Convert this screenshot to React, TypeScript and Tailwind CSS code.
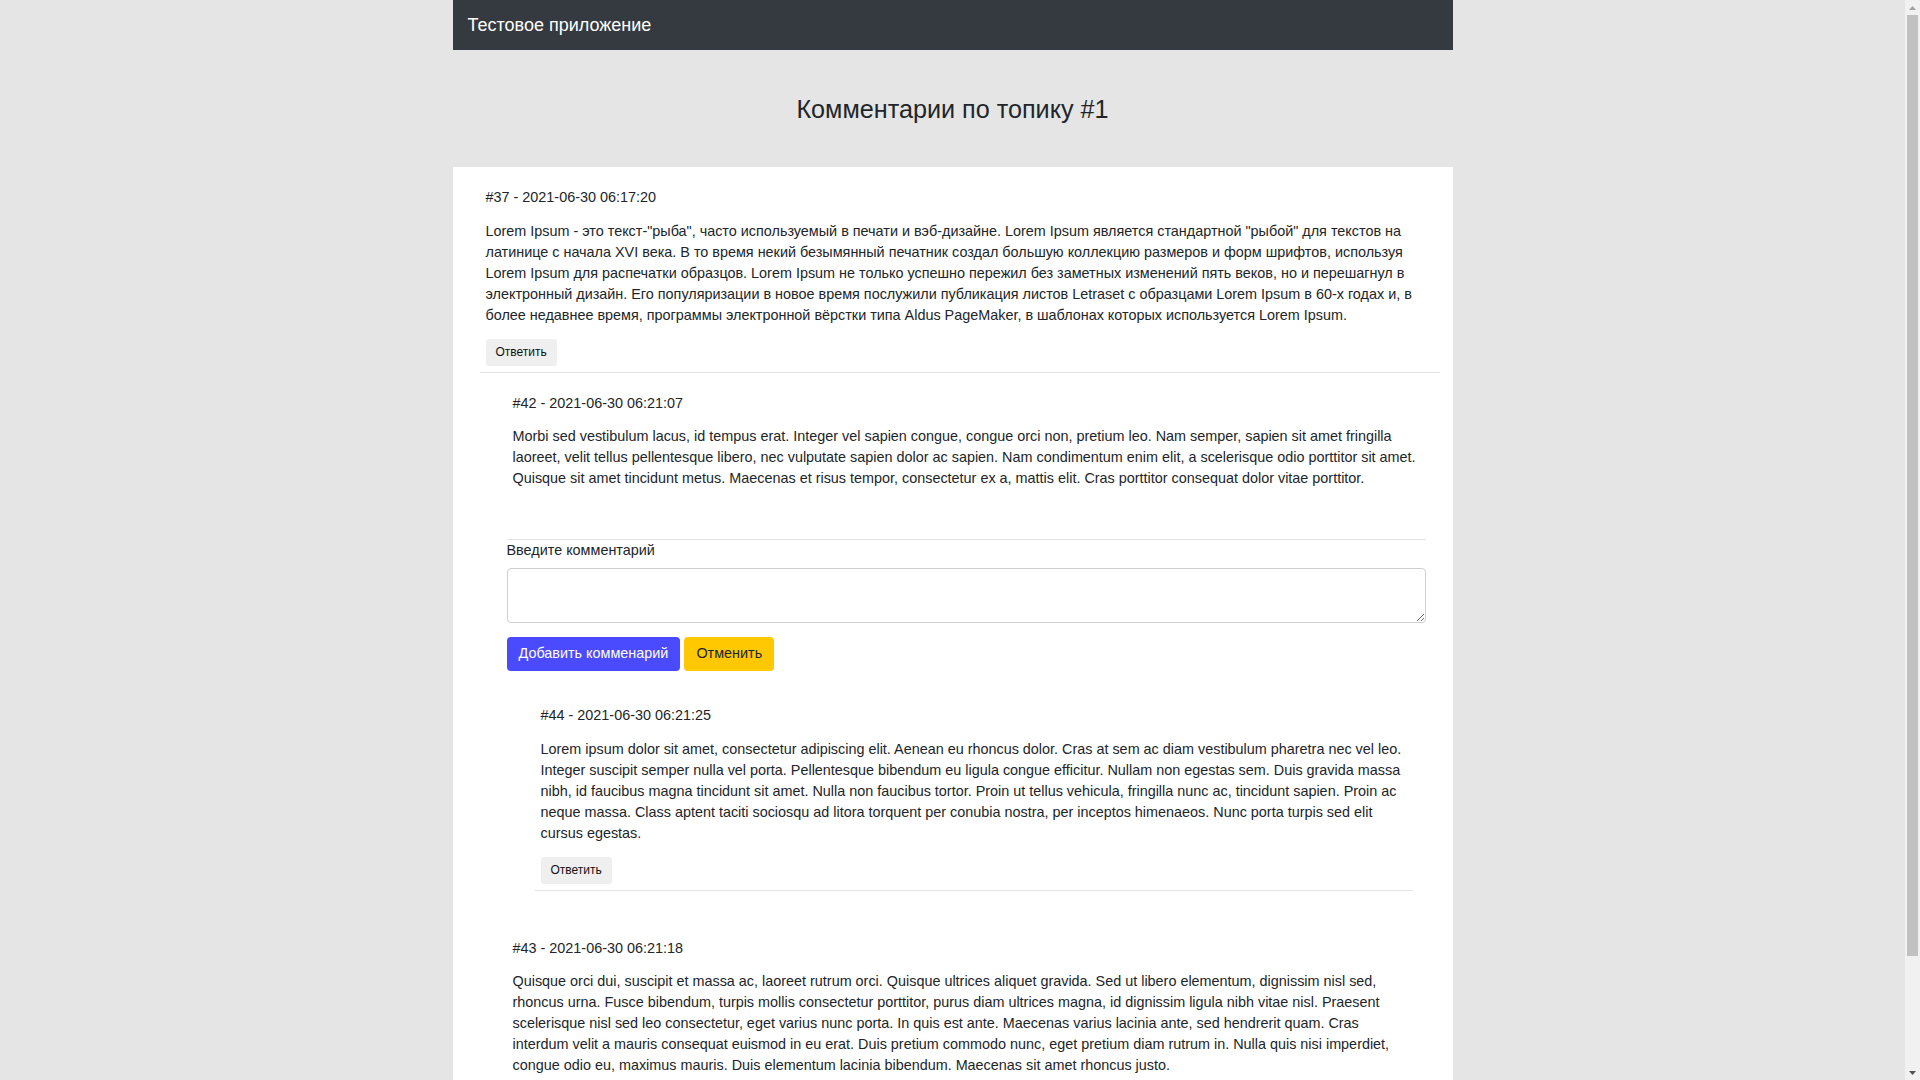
import React from 'react';

type CommentProps = {
    id: number;
    date: string;
    text: string;
    replyButton?: boolean;
};

function CommentHead({ id, date, text, replyButton = true }: CommentProps) {
    return (
        <div className="pt-[20px] pl-[6px]">
            <div className="text-[14.4px] leading-[21px]">#{id} - {date}</div>
            <p className="mt-[12.5px] text-[14.4px] leading-[21px] pr-[8px]">{text}</p>
            {replyButton && (
                <button className="mt-[13px] mb-[6px] h-[27px] px-[10px] rounded-[3px] bg-[#efefef] text-[12px] text-[#111]">
                    Ответить
                </button>
            )}
        </div>
    );
}

function ReplyForm() {
    return (
        <div className="mt-[50px] mb-[14px] border-t border-[#e3e3e3]">
            <label className="block text-[14.4px] leading-[21px]">Введите комментарий</label>
            <textarea className="mt-[7px] block w-full h-[55px] border border-[#cfcfcf] rounded-[4px] bg-white resize-y outline-none" />
            <div className="mt-[14px] flex gap-[4px]">
                <button className="h-[34px] px-[12px] rounded-[4px] bg-[#4a4aff] text-white text-[14.4px]">
                    Добавить комменарий
                </button>
                <button className="h-[34px] px-[12px] rounded-[4px] bg-[#ffc800] text-[#212529] text-[14.4px]">
                    Отменить
                </button>
            </div>
        </div>
    );
}

// classic browser scrollbar, page scrolled to the top
function Scrollbar() {
    return (
        <div className="w-[15px] h-full bg-[#f1f1f1] flex flex-col items-center shrink-0">
            <div className="h-[15px] flex items-center justify-center">
                <svg width="7" height="4" viewBox="0 0 7 4"><path d="M3.5 0 L7 4 L0 4 Z" fill="#a3a3a3" /></svg>
            </div>
            <div className="flex-1 w-full px-[2px]">
                <div className="h-[941px] bg-[#c1c1c1]" />
            </div>
            <div className="h-[15px] flex items-center justify-center">
                <svg width="7" height="4" viewBox="0 0 7 4"><path d="M0 0 L7 0 L3.5 4 Z" fill="#505050" /></svg>
            </div>
        </div>
    );
}

const LOREM_37 =
    'Lorem Ipsum - это текст-"рыба", часто используемый в печати и вэб-дизайне. Lorem Ipsum является стандартной "рыбой" для текстов на латинице с начала XVI века. В то время некий безымянный печатник создал большую коллекцию размеров и форм шрифтов, используя Lorem Ipsum для распечатки образцов. Lorem Ipsum не только успешно пережил без заметных изменений пять веков, но и перешагнул в электронный дизайн. Его популяризации в новое время послужили публикация листов Letraset с образцами Lorem Ipsum в 60-х годах и, в более недавнее время, программы электронной вёрстки типа Aldus PageMaker, в шаблонах которых используется Lorem Ipsum.';
const LOREM_42 =
    'Morbi sed vestibulum lacus, id tempus erat. Integer vel sapien congue, congue orci non, pretium leo. Nam semper, sapien sit amet fringilla laoreet, velit tellus pellentesque libero, nec vulputate sapien dolor ac sapien. Nam condimentum enim elit, a scelerisque odio porttitor sit amet. Quisque sit amet tincidunt metus. Maecenas et risus tempor, consectetur ex a, mattis elit. Cras porttitor consequat dolor vitae porttitor.';
const LOREM_44 =
    'Lorem ipsum dolor sit amet, consectetur adipiscing elit. Aenean eu rhoncus dolor. Cras at sem ac diam vestibulum pharetra nec vel leo. Integer suscipit semper nulla vel porta. Pellentesque bibendum eu ligula congue efficitur. Nullam non egestas sem. Duis gravida massa nibh, id faucibus magna tincidunt sit amet. Nulla non faucibus tortor. Proin ut tellus vehicula, fringilla nunc ac, tincidunt sapien. Proin ac neque massa. Class aptent taciti sociosqu ad litora torquent per conubia nostra, per inceptos himenaeos. Nunc porta turpis sed elit cursus egestas.';
const LOREM_43 =
    'Quisque orci dui, suscipit et massa ac, laoreet rutrum orci. Quisque ultrices aliquet gravida. Sed ut libero elementum, dignissim nisl sed, rhoncus urna. Fusce bibendum, turpis mollis consectetur porttitor, purus diam ultrices magna, id dignissim ligula nibh vitae nisl. Praesent scelerisque nisl sed leo consectetur, eget varius nunc porta. In quis est ante. Maecenas varius lacinia ante, sed hendrerit quam. Cras interdum velit a mauris consequat euismod in eu erat. Duis pretium commodo nunc, eget pretium diam rutrum in. Nulla quis nisi imperdiet, congue odio eu, maximus mauris. Duis elementum lacinia bibendum. Maecenas sit amet rhoncus justo.';

export default function App() {
    return (
        <div className="h-screen flex overflow-hidden bg-[#e5e5e5] text-[#212529] font-['Liberation_Sans',Arial,sans-serif]">
            <div className="flex-1 overflow-hidden">
                <div className="w-[1000px] mx-auto">
                    <nav className="h-[50px] bg-[#343a40] flex items-center px-[15px]">
                        <span className="text-white text-[18px]">Тестовое приложение</span>
                    </nav>
                    <div className="h-[117px] pt-[2px] flex items-center justify-center">
                        <h1 className="text-[25.2px] leading-none">Комментарии по топику #1</h1>
                    </div>
                    <div className="bg-white pb-[40px]">
                        {/* #37 with its replies */}
                        <div className="ml-[27px] mr-[13px]">
                            <div className="border-b border-[#e3e3e3]">
                                <CommentHead id={37} date="2021-06-30 06:17:20" text={LOREM_37} />
                            </div>
                            <div className="ml-[27px] mr-[14px]">
                                <div className="pb-[27px]">
                                    <CommentHead id={42} date="2021-06-30 06:21:07" text={LOREM_42} replyButton={false} />
                                    <ReplyForm />
                                    <div className="ml-[28px] mr-[13px] border-b border-[#e3e3e3]">
                                        <CommentHead id={44} date="2021-06-30 06:21:25" text={LOREM_44} />
                                    </div>
                                </div>
                                <div className="border-b border-[#e3e3e3]">
                                    <CommentHead id={43} date="2021-06-30 06:21:18" text={LOREM_43} />
                                </div>
                            </div>
                        </div>
                    </div>
                </div>
            </div>
            <Scrollbar />
        </div>
    );
}
